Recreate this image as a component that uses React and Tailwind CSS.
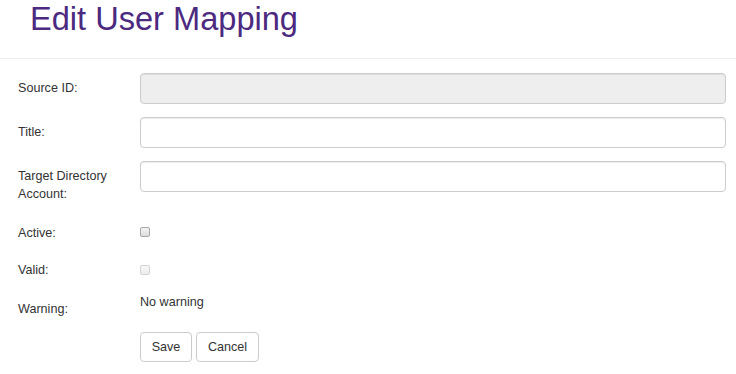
export default function App() {
  const labelCls = 'w-[140px] shrink-0 pl-[18px] pt-[6px] leading-[18px]'
  const inputCls = 'flex-1 h-[31px] rounded-[4px] border border-[#cccccc] shadow-[inset_0_1px_1px_rgba(0,0,0,0.075)]'

  return (
    <div className="w-[736px] h-[374px] bg-white text-[#333333] text-[12.6px] overflow-hidden" style={{ fontFamily: '"Liberation Sans", Arial, sans-serif' }}>
      <div className="h-[59px] border-b border-[#eeeeee] pl-[30px] pt-[1px]">
        <h1 className="text-[32.6px] leading-[35px] font-normal text-[#4b2a80]">Edit User Mapping</h1>
      </div>

      <div className="pr-[10px] pt-[14px] flex flex-col">
        <div className="flex items-start h-[31px]">
          <label className={labelCls}>Source ID:</label>
          <div className={`${inputCls} bg-[#eeeeee]`}></div>
        </div>

        <div className="flex items-start h-[31px] mt-[13px]">
          <label className={labelCls}>Title:</label>
          <div className={`${inputCls} bg-white`}></div>
        </div>

        <div className="flex items-start mt-[13px]">
          <label className={labelCls}>Target Directory<br />Account:</label>
          <div className={`${inputCls} bg-white`}></div>
        </div>

        <div className="flex items-start mt-[15px] h-[24px]">
          <label className={labelCls}>Active:</label>
          <span className="mt-[9px] w-[10px] h-[10px] rounded-[2px] border border-[#a8a8a8] bg-gradient-to-b from-[#f4f4f4] to-[#dcdcdc]"></span>
        </div>

        <div className="flex items-start mt-[13px] h-[24px]">
          <label className={labelCls}>Valid:</label>
          <span className="mt-[10px] w-[10px] h-[10px] rounded-[2px] border border-[#d4d4d4] bg-gradient-to-b from-[#f8f8f8] to-[#ececec]"></span>
        </div>

        <div className="flex items-start mt-[13px] h-[26px]">
          <label className={`${labelCls} pt-[8px]`}>Warning:</label>
          <span className="pt-[1px] leading-[18px]">No warning</span>
        </div>

        <div className="flex mt-[14px] pl-[140px] gap-[4px]">
          <button className="h-[30px] w-[52px] rounded-[4px] border border-[#cccccc] bg-white text-[#333333]">Save</button>
          <button className="h-[30px] w-[63px] rounded-[4px] border border-[#cccccc] bg-white text-[#333333]">Cancel</button>
        </div>
      </div>
    </div>
  )
}
